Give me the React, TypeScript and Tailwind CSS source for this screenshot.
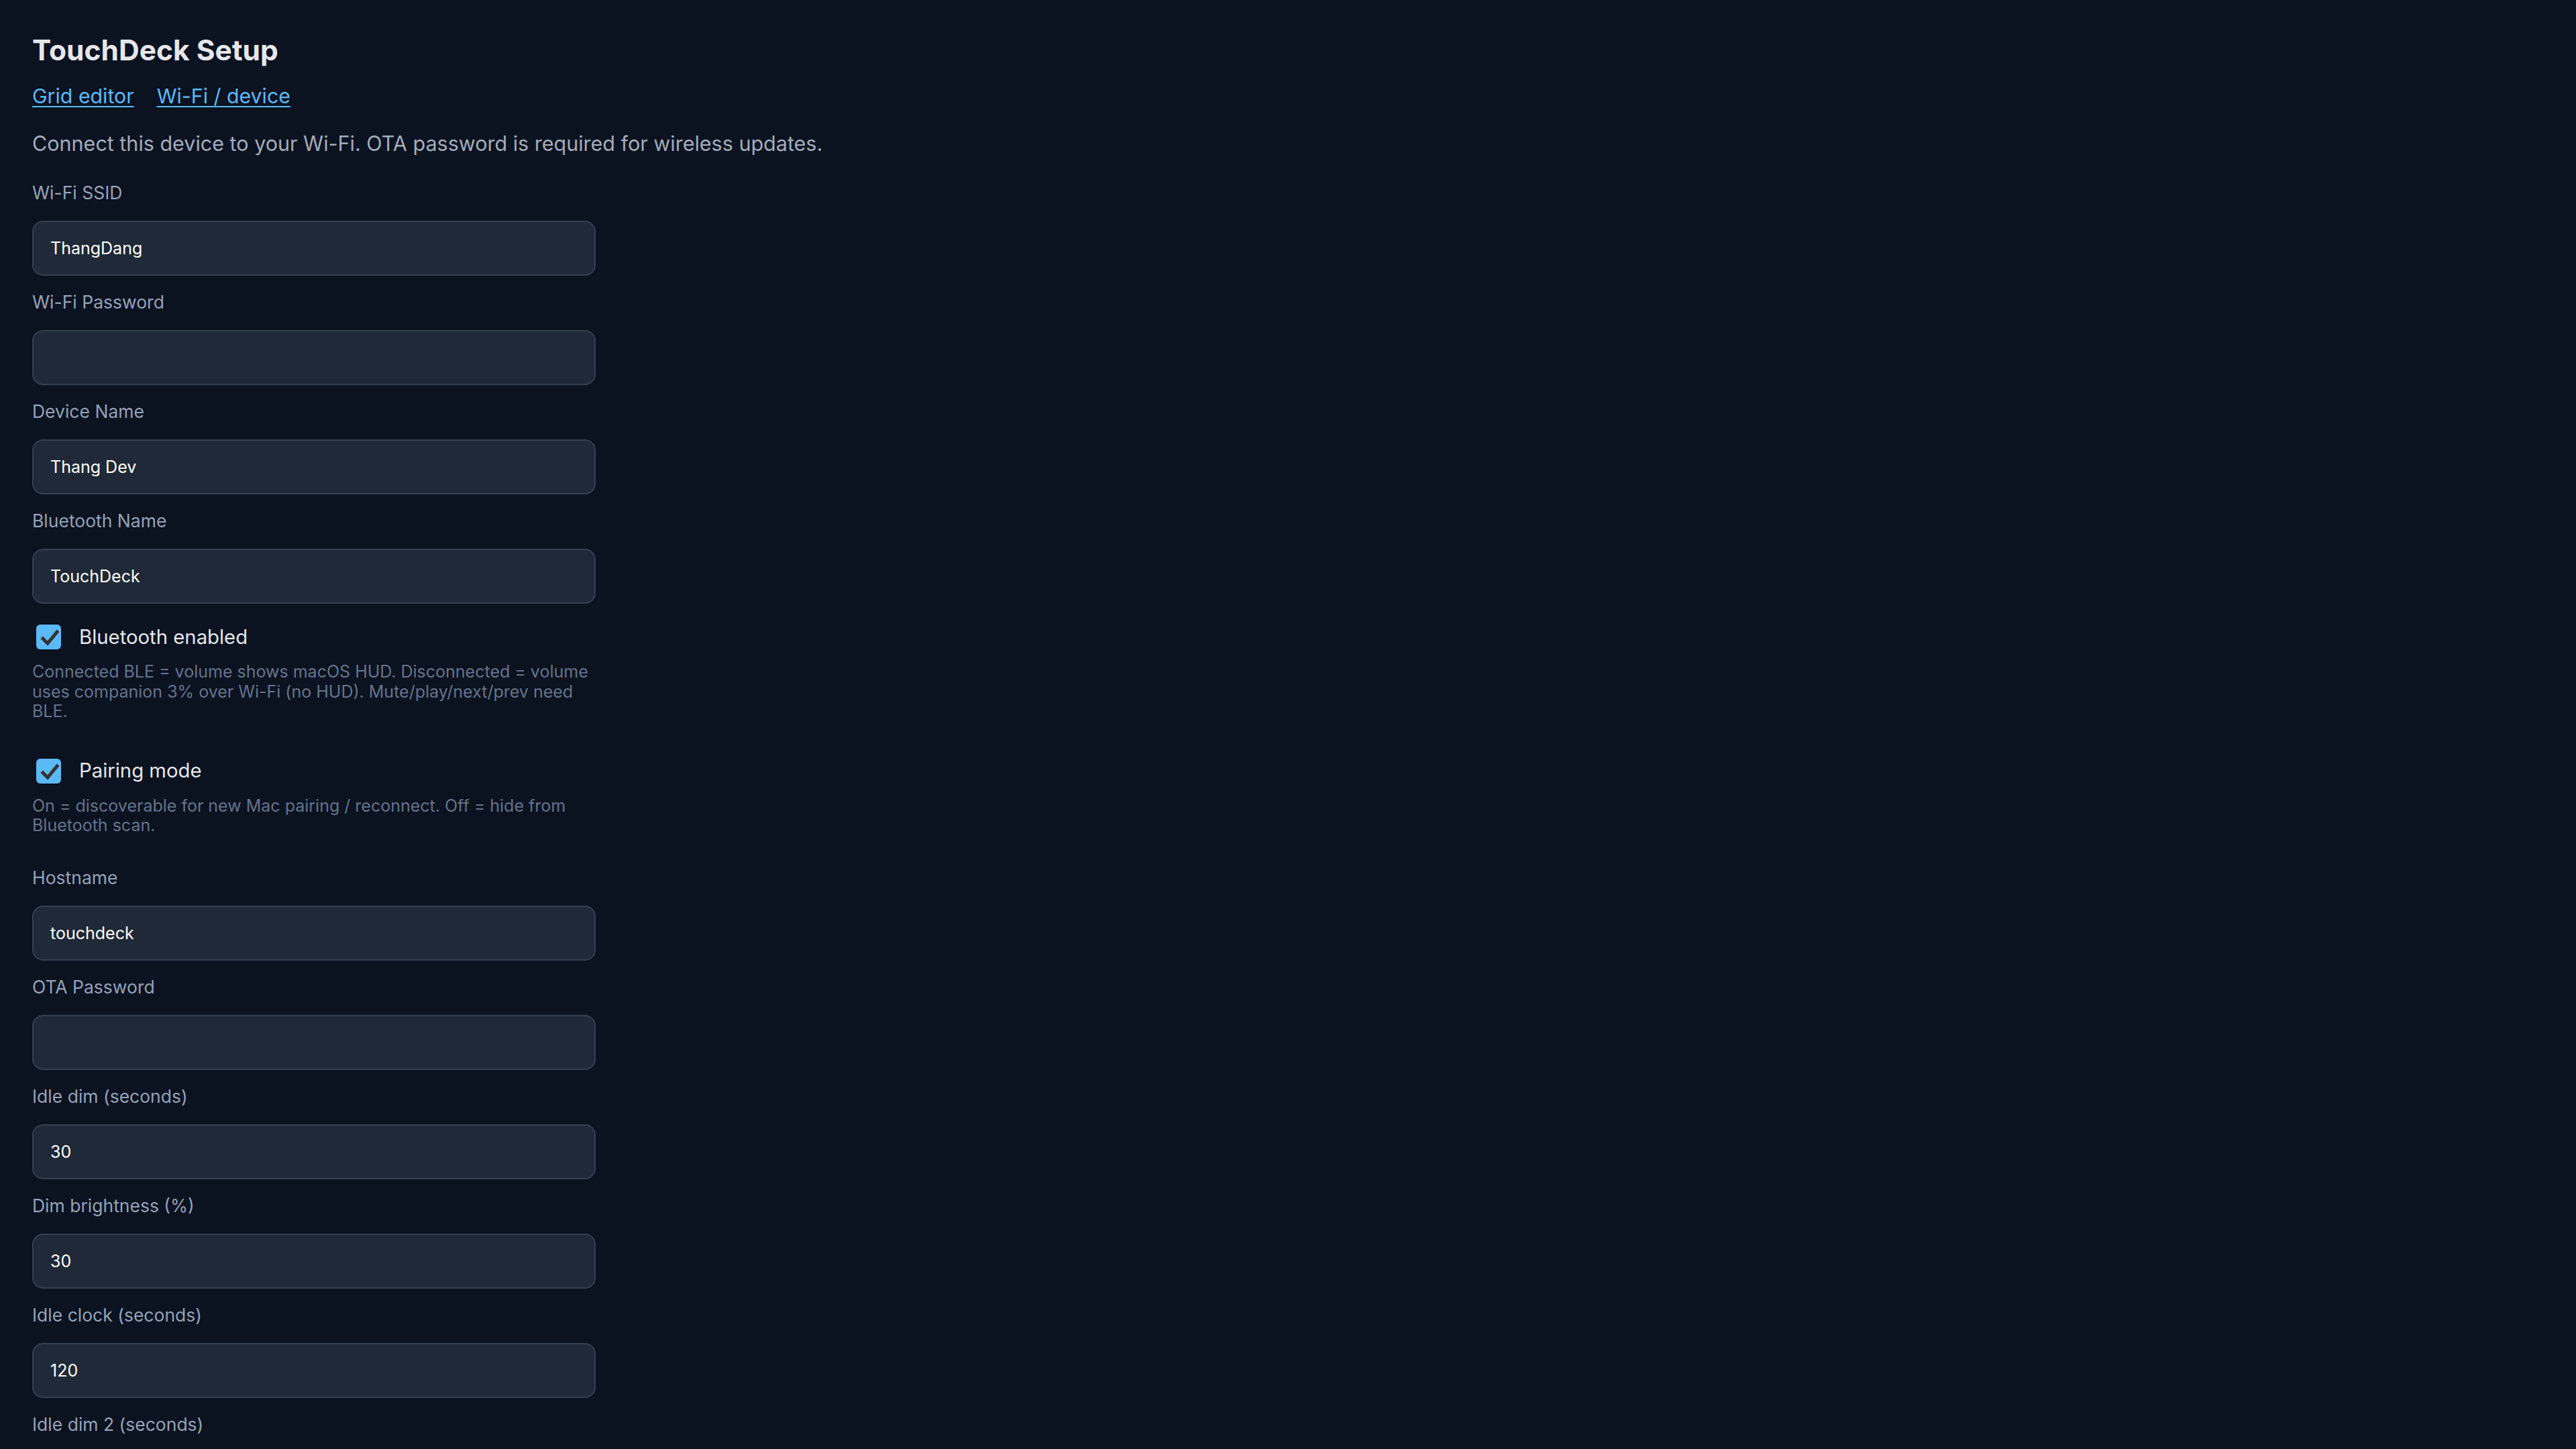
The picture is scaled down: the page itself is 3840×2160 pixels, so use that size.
import { useState } from "react";

type Field = {
  id: string;
  label: string;
  value: string;
  type?: string;
};

const wifiFields: Field[] = [
  { id: "ssid", label: "Wi-Fi SSID", value: "ThangDang" },
  { id: "pass", label: "Wi-Fi Password", value: "", type: "password" },
  { id: "device", label: "Device Name", value: "Thang Dev" },
  { id: "btName", label: "Bluetooth Name", value: "TouchDeck" },
];

const deviceFields: Field[] = [
  { id: "host", label: "Hostname", value: "touchdeck" },
  { id: "ota", label: "OTA Password", value: "", type: "password" },
  { id: "idleDim", label: "Idle dim (seconds)", value: "30" },
  { id: "dimBright", label: "Dim brightness (%)", value: "30" },
  { id: "idleClock", label: "Idle clock (seconds)", value: "120" },
  { id: "idleDim2", label: "Idle dim 2 (seconds)", value: "300" },
];

function TextField({ field, first }: { field: Field; first?: boolean }) {
  const [value, setValue] = useState(field.value);
  return (
    <div className={first ? "" : "mt-[21px]"}>
      <label
        htmlFor={field.id}
        className="block text-[26.5px] leading-[36px] text-[#94a3b8]"
      >
        {field.label}
      </label>
      <input
        id={field.id}
        type={field.type ?? "text"}
        value={value}
        onChange={(e) => setValue(e.target.value)}
        className="mt-[24px] block h-[82px] w-full rounded-[16px] border-2 border-[#354050] bg-[#1f2937] px-[25px] text-[25px] text-white outline-none"
      />
    </div>
  );
}

function CheckRow({
  label,
  help,
  className,
}: {
  label: string;
  help: string;
  className: string;
}) {
  const [checked, setChecked] = useState(true);
  return (
    <div className={className}>
      <label className="flex h-[37px] cursor-pointer items-center gap-[27px]">
        <span
          onClick={() => setChecked((c) => !c)}
          className={`ml-[6px] flex h-[37px] w-[37px] shrink-0 items-center justify-center rounded-[6px] ${
            checked ? "bg-[#5cb9f7]" : "border-2 border-[#6b7280] bg-white"
          }`}
        >
          {checked ? (
            <svg viewBox="0 0 37 37" className="h-[37px] w-[37px]">
              <path
                d="M10 21 L17 28 L31 11"
                fill="none"
                stroke="#333333"
                strokeWidth="5"
                strokeLinecap="square"
                strokeLinejoin="miter"
              />
            </svg>
          ) : null}
        </span>
        <span className="text-[29.3px] text-[#e5e7eb]">{label}</span>
      </label>
      <p className="mt-[19px] text-[25px] leading-[29.5px] text-[#64748b]">
        {help}
      </p>
    </div>
  );
}

export default function App() {
  return (
    <div className="min-h-screen bg-[#0b1220] px-12 pt-[47px] font-['Inter','Noto_Sans',sans-serif] antialiased">
      <h1 className="text-[42.5px] font-bold leading-[56px] text-[#e5e7eb]">
        TouchDeck Setup
      </h1>
      <nav className="mt-[20px] flex gap-[34px] text-[30.3px] leading-[40px]">
        <a
          href="#grid"
          className="text-[#5cb8f5] underline decoration-2 underline-offset-[4px]"
        >
          Grid editor
        </a>
        <a
          href="#wifi"
          className="text-[#5cb8f5] underline decoration-2 underline-offset-[4px]"
        >
          Wi-Fi / device
        </a>
      </nav>
      <p className="mt-[29px] text-[30.5px] leading-[44px] text-[#a3acbb]">
        Connect this device to your Wi-Fi. OTA password is required for wireless
        updates.
      </p>

      <form
        className="mt-[33px] max-w-[840px]"
        onSubmit={(e) => e.preventDefault()}
      >
        {wifiFields.map((f, i) => (
          <TextField key={f.id} field={f} first={i === 0} />
        ))}

        <CheckRow
          className="mt-[31px]"
          label="Bluetooth enabled"
          help="Connected BLE = volume shows macOS HUD. Disconnected = volume uses companion 3% over Wi-Fi (no HUD). Mute/play/next/prev need BLE."
        />
        <CheckRow
          className="mt-[55px]"
          label="Pairing mode"
          help="On = discoverable for new Mac pairing / reconnect. Off = hide from Bluetooth scan."
        />

        <div className="mt-[44px]">
          {deviceFields.map((f, i) => (
            <TextField key={f.id} field={f} first={i === 0} />
          ))}
        </div>
      </form>
    </div>
  );
}
